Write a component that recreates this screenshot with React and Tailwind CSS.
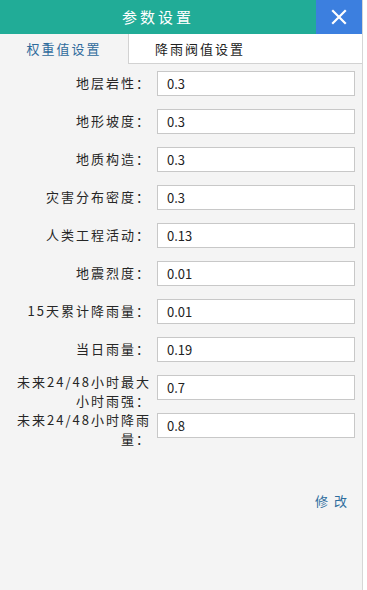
import React, { useState } from 'react';

const rows = [
  { label: ['地层岩性：'], value: '0.3' },
  { label: ['地形坡度：'], value: '0.3' },
  { label: ['地质构造：'], value: '0.3' },
  { label: ['灾害分布密度：'], value: '0.3' },
  { label: ['人类工程活动：'], value: '0.13' },
  { label: ['地震烈度：'], value: '0.01' },
  { label: ['15天累计降雨量：'], value: '0.01' },
  { label: ['当日雨量：'], value: '0.19' },
  { label: ['未来24/48小时最大', '小时雨强：'], value: '0.7' },
  { label: ['未来24/48小时降雨', '量：'], value: '0.8' },
];

const font = { fontFamily: '"Noto Sans CJK SC", "Noto Sans", sans-serif' };

const App = () => {
  const [tab, setTab] = useState(0);
  const [values, setValues] = useState(rows.map(r => r.value));

  return (
    <div className="w-[367px] h-[590px] bg-white overflow-hidden" style={font}>
      <div className="w-[363px] h-full flex flex-col bg-[#f4f4f4] border-r border-[#d6d6d6]">
        {/* header */}
        <div className="h-[34px] flex shrink-0 bg-[#21ac97]">
          <div className="flex-1 flex items-center justify-center text-white text-[15px] tracking-[3px]">参数设置</div>
          <button className="w-[46px] h-full bg-[#3c7fdf] flex items-center justify-center">
            <svg width="16" height="16" viewBox="0 0 16 16" fill="none" stroke="white" strokeWidth="2.2" strokeLinecap="square">
              <path d="M2 2L14 14M14 2L2 14" />
            </svg>
          </button>
        </div>

        {/* tabs */}
        <div className="h-[30px] flex shrink-0">
          <div
            onClick={() => setTab(0)}
            className="w-[128px] flex items-center justify-center text-[13px] tracking-[2px] text-[#2e6b9c] bg-[#f4f4f4]"
          >
            权重值设置
          </div>
          <div
            onClick={() => setTab(1)}
            className="flex-1 flex items-center pl-[26px] text-[13px] tracking-[2px] text-[#222] bg-white border-l border-b border-[#d2d2d2]"
          >
            降雨阀值设置
          </div>
        </div>

        {/* form */}
        <div className="flex flex-col gap-[13px] pt-[7px]">
          {rows.map((r, i) => (
            <div key={r.label.join('')} className="flex items-start h-[25px]">
              <div
                className={`w-[151px] shrink-0 text-right text-[13px] tracking-[2px] text-[#262626] whitespace-nowrap ${r.label.length > 1 ? 'leading-[19px] -mt-[3px]' : 'leading-[16px] pt-[4px]'}`}
              >
                {r.label.map(l => (
                  <div key={l}>{l}</div>
                ))}
              </div>
              <input
                value={values[i]}
                onChange={e => setValues(values.map((v, j) => (j === i ? e.target.value : v)))}
                className="ml-[6px] w-[198px] h-[25px] bg-white border border-[#c8c8c8] px-[9px] text-[13px] text-[#222] outline-none"
                style={font}
              />
            </div>
          ))}
        </div>

        <div className="flex justify-end pr-[9px] pt-[53px]">
          <span className="text-[13px] tracking-[6px] text-[#2d6c9d] cursor-pointer">修改</span>
        </div>
      </div>
    </div>
  );
};

export default App;
